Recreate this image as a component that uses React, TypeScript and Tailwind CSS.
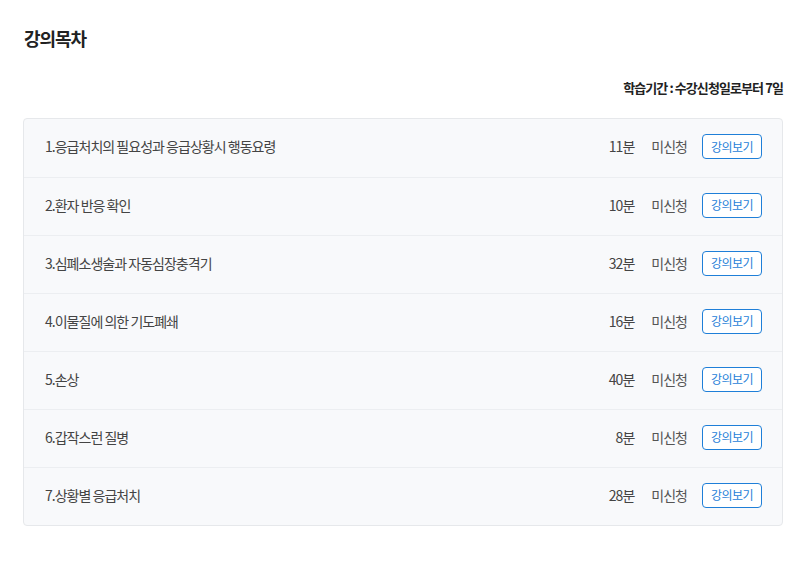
const lectures = [
  { title: '1.응급처치의 필요성과 응급상황시 행동요령', time: '11분' },
  { title: '2.환자 반응 확인', time: '10분' },
  { title: '3.심폐소생술과 자동심장충격기', time: '32분' },
  { title: '4.이물질에 의한 기도폐쇄', time: '16분' },
  { title: '5.손상', time: '40분' },
  { title: '6.갑작스런 질병', time: '8분' },
  { title: '7.상황별 응급처치', time: '28분' },
];

export default function App() {
  return (
    <div className="min-h-screen bg-white pl-[23px] pr-[20px] pt-[25px] font-['Noto_Sans_CJK_KR',sans-serif]">
      <h2 className="text-[18px] font-bold leading-[26px] tracking-[-0.06em] text-[#222] pl-px">강의목차</h2>

      <p className="mt-[27px] text-right text-[13px] font-semibold leading-[20px] tracking-[-0.07em] text-[#222]">
        학습기간 : 수강신청일로부터 7일
      </p>

      <ul className="mt-[20px] rounded border border-[#e6e8eb] bg-[#f8f9fb]">
        {lectures.map((l, i) => (
          <li
            key={i}
            className={`flex h-[58px] items-center pb-[3px] pl-[21px] pr-[20px] ${i > 0 ? 'border-t border-[#eceef1]' : ''}`}
          >
            <span className="flex-1 text-[14px] tracking-[-0.07em] text-[#444]">{l.title}</span>
            <span className="text-[14px] tracking-[-0.07em] text-[#444]">{l.time}</span>
            <span className="ml-[17px] text-[14px] tracking-[-0.07em] text-[#555]">미신청</span>
            <button className="ml-[15px] h-[25px] w-[60px] rounded border border-[#1f7fd8] bg-white text-[12px] tracking-[-0.05em] text-[#1f7fd8]">
              강의보기
            </button>
          </li>
        ))}
      </ul>
    </div>
  );
}
